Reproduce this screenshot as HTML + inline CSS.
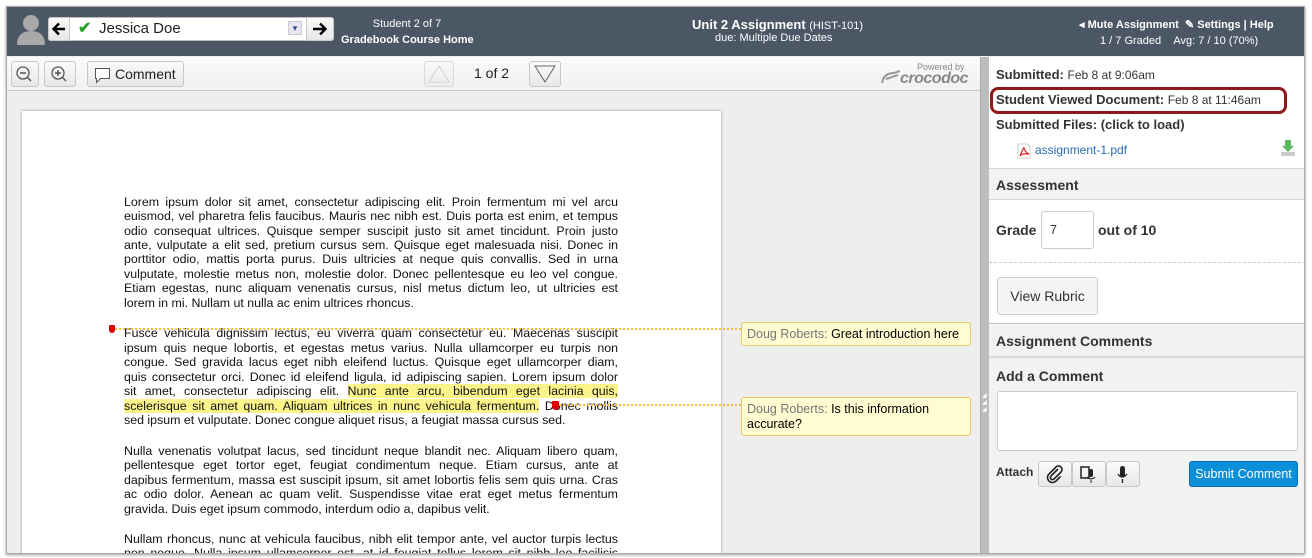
<!DOCTYPE html>
<html><head><meta charset="utf-8"><style>
*{box-sizing:border-box;margin:0;padding:0}
body{width:1312px;height:558px;background:#fff;font-family:"Liberation Sans",Arial,sans-serif;position:relative;overflow:hidden;color:#333}
.a{position:absolute}
#frame{left:6px;top:6px;width:1299px;height:548px;border:1px solid #aaa;box-shadow:0 1px 3px rgba(0,0,0,.4);overflow:hidden;background:#eee}
#hdr{left:0;top:0;width:1299px;height:49px;background:#4c5766;color:#fff}
.btn{position:absolute;background:linear-gradient(#fafafa,#e8e8e8);border:1px solid #c8c8c8;border-radius:3px}
.ln{position:absolute;left:117px;width:494px;font-size:12.4px;line-height:14.4px;color:#111;text-align:justify;text-align-last:justify;white-space:nowrap;height:15px;overflow:visible}
.ln.l{text-align-last:left}
.hl{background:#fbf48a}
.rp{font-size:13px}
</style></head><body>
<div id="frame" class="a">
 <div id="hdr" class="a">
  <svg class="a" style="left:9px;top:6px" width="30" height="32" viewBox="0 0 30 32"><circle cx="15" cy="10" r="8" fill="#a9a9a9"/><path d="M1 32 Q1 18 15 18 Q29 18 29 32Z" fill="#a9a9a9"/></svg>
  <div class="a" style="left:41px;top:10px;width:286px;height:24px;background:#fff;border:1px solid #bbb;border-radius:3px"></div>
  <div class="btn" style="left:41px;top:10px;width:22px;height:24px;border-radius:3px 0 0 3px"><svg width="20" height="22"><path d="M16 11H5M10 5.5L4.5 11l5.5 5.5" fill="none" stroke="#000" stroke-width="2.4"/></svg></div>
  <div class="btn" style="left:299px;top:10px;width:28px;height:24px;border-radius:0 3px 3px 0"><svg width="26" height="22"><path d="M6 11h12M13 5.5l5.5 5.5L13 16.5" fill="none" stroke="#000" stroke-width="2.4"/></svg></div>
  <div class="a" style="left:71px;top:11px;color:#2ca02c;font-size:16px;font-weight:bold">✔</div>
  <div class="a" style="left:92px;top:13px;color:#222;font-size:15px">Jessica Doe</div>
  <div class="a" style="left:281px;top:14px;width:14px;height:14px;background:#e6e6f0;border:1px solid #ccc;color:#2b4a9a;font-size:9px;text-align:center;line-height:13px">▾</div>
  <div class="a" style="left:340px;top:11px;width:120px;text-align:center;font-size:11px">Student 2 of 7</div>
  <div class="a" style="left:334px;top:27px;font-size:11px;font-weight:bold">Gradebook Course Home</div>
  <div class="a" style="left:685px;top:10px;font-size:13px;font-weight:bold">Unit 2 Assignment <span style="font-weight:normal;font-size:11px">(HIST-101)</span></div>
  <div class="a" style="left:708px;top:25px;font-size:11px">due: Multiple Due Dates</div>
  <div class="a" style="left:1072px;top:11px;font-size:11px;font-weight:bold">◂ Mute Assignment &nbsp;✎ Settings | Help</div>
  <div class="a" style="left:1093px;top:28px;font-size:11px">1 / 7 Graded &nbsp;&nbsp;&nbsp;Avg: 7 / 10 (70%)</div>
 </div>
 <div class="a" style="left:0;top:50px;width:973px;height:34px;background:linear-gradient(#fbfbfb,#f1f1f1);border-bottom:1px solid #c8c8c8"></div>
 <div class="btn" style="left:4px;top:54px;width:28px;height:26px"><svg width="26" height="24"><circle cx="11" cy="11" r="6" fill="none" stroke="#555" stroke-width="1.3"/><path d="M8 11h6M15 15l4 4" stroke="#555" stroke-width="1.5"/></svg></div>
 <div class="btn" style="left:37px;top:54px;width:32px;height:26px"><svg width="30" height="24"><circle cx="13" cy="11" r="6" fill="none" stroke="#555" stroke-width="1.3"/><path d="M10 11h6M13 8v6M17 15l4 4" stroke="#555" stroke-width="1.5"/></svg></div>
 <div class="btn" style="left:80px;top:54px;width:97px;height:26px;font-size:14px;color:#222;line-height:24px;padding-left:27px">Comment<svg class="a" style="left:6px;top:5px" width="18" height="17"><path d="M1.5 1.5h14v10h-9l-4 4v-4h-1z" fill="#fff" stroke="#555"/></svg></div>
 <div class="btn" style="left:417px;top:54px;width:30px;height:26px;opacity:.6"><svg width="28" height="24"><path d="M4 20L14 4 24 20Z" fill="none" stroke="#bbb"/></svg></div>
 <div class="a" style="left:467px;top:58px;font-size:14px;color:#222">1 of 2</div>
 <div class="btn" style="left:522px;top:54px;width:32px;height:26px"><svg width="30" height="24"><path d="M5 4L15 20 25 4Z" fill="none" stroke="#666"/></svg></div>
 <div class="a" style="left:910px;top:55px;font-size:9px;color:#888">Powered by</div>
 <div class="a" style="left:893px;top:63px;font-size:16px;color:#888;font-style:italic;font-weight:bold;letter-spacing:-0.5px">crocodoc</div>
 <svg class="a" style="left:873px;top:62px" width="22" height="16"><path d="M2 14Q4 4 14 4L20 2M6 10l12-4" fill="none" stroke="#999" stroke-width="2"/></svg>
 <div class="a" style="left:15px;top:104px;width:699px;height:460px;background:#fff;box-shadow:0 0 3px rgba(0,0,0,.35)"></div>
 <div class="ln" style="top:188px">Lorem ipsum dolor sit amet, consectetur adipiscing elit. Proin fermentum mi vel arcu</div>
 <div class="ln" style="top:202px">euismod, vel pharetra felis faucibus. Mauris nec nibh est. Duis porta est enim, et tempus</div>
 <div class="ln" style="top:217px">odio consequat ultrices. Quisque semper suscipit justo sit amet tincidunt. Proin justo</div>
 <div class="ln" style="top:231px">ante, vulputate a elit sed, pretium cursus sem. Quisque eget malesuada nisi. Donec in</div>
 <div class="ln" style="top:245px">porttitor odio, mattis porta purus. Duis ultricies at neque quis convallis. Sed in urna</div>
 <div class="ln" style="top:260px">vulputate, molestie metus non, molestie dolor. Donec pellentesque eu leo vel congue.</div>
 <div class="ln" style="top:274px">Etiam egestas, nunc aliquam venenatis cursus, nisl metus dictum leo, ut ultricies est</div>
 <div class="ln l" style="top:289px">lorem in mi. Nullam ut nulla ac enim ultrices rhoncus.</div>
 <div class="ln" style="top:319px">Fusce vehicula dignissim lectus, eu viverra quam consectetur eu. Maecenas suscipit</div>
 <div class="ln" style="top:334px">ipsum quis neque lobortis, et egestas metus varius. Nulla ullamcorper eu turpis non</div>
 <div class="ln" style="top:348px">congue. Sed gravida lacus eget nibh eleifend luctus. Quisque eget ullamcorper diam,</div>
 <div class="ln" style="top:363px">quis consectetur orci. Donec id eleifend ligula, id adipiscing sapien. Lorem ipsum dolor</div>
 <div class="ln" style="top:377px">sit amet, consectetur adipiscing elit. <span class="hl">Nunc ante arcu, bibendum eget lacinia quis,</span></div>
 <div class="ln" style="top:392px"><span class="hl">scelerisque sit amet quam. Aliquam ultrices in nunc vehicula fermentum.</span> Donec mollis</div>
 <div class="ln l" style="top:406px">sed ipsum et vulputate. Donec congue aliquet risus, a feugiat massa cursus sed.</div>
 <div class="ln" style="top:437px">Nulla venenatis volutpat lacus, sed tincidunt neque blandit nec. Aliquam libero quam,</div>
 <div class="ln" style="top:451px">pellentesque eget tortor eget, feugiat condimentum neque. Etiam cursus, ante at</div>
 <div class="ln" style="top:466px">dapibus fermentum, massa est suscipit ipsum, sit amet lobortis felis sem quis urna. Cras</div>
 <div class="ln" style="top:480px">ac odio dolor. Aenean ac quam velit. Suspendisse vitae erat eget metus fermentum</div>
 <div class="ln l" style="top:495px">gravida. Duis eget ipsum commodo, interdum odio a, dapibus velit.</div>
 <div class="ln" style="top:525px">Nullam rhoncus, nunc at vehicula faucibus, nibh elit tempor ante, vel auctor turpis lectus</div>
 <div class="ln" style="top:539px">non neque. Nulla ipsum ullamcorper est, at id feugiat tellus lorem sit nibh leo facilisis</div>
 <div class="a" style="left:102px;top:318px;width:6px;height:8px;background:#d00;border-radius:1px 1px 3px 3px"></div>
 <div class="a" style="left:108px;top:321px;width:626px;border-top:2px dotted #f0c040"></div>
 <div class="a" style="left:545px;top:394px;width:7px;height:9px;background:#d00;border-radius:1px 1px 4px 4px"></div>
 <div class="a" style="left:552px;top:397px;width:182px;border-top:2px dotted #f0c040"></div>
 <div class="a" style="left:734px;top:315px;width:230px;height:24px;background:#fffcd2;border:1px solid #e8c86a;border-radius:3px;font-size:12.5px;padding:4px 5px;color:#000;white-space:nowrap"><span style="color:#777">Doug Roberts:</span> Great introduction here</div>
 <div class="a" style="left:734px;top:390px;width:230px;height:39px;background:#fffcd2;border:1px solid #e8c86a;border-radius:3px;font-size:12.5px;padding:4px 5px;color:#000;line-height:15px"><span style="color:#777">Doug Roberts:</span> Is this information accurate?</div>
 <div class="a" style="left:973px;top:50px;width:9px;height:500px;background:#bdbdbd;border-left:1px solid #aaa"></div>
 <div class="a" style="left:975px;top:386px;font-size:6px;color:#fff;line-height:7px">◢<br>◢<br>◢</div>
 <div class="a rp" style="left:982px;top:50px;width:317px;height:500px;background:#fff">
  <div class="a" style="left:7px;top:10px;white-space:nowrap"><b>Submitted:</b> <span style="font-size:12px">Feb 8 at 9:06am</span></div>
  <div class="a" style="left:1px;top:30px;width:297px;height:27px;border:3px solid #8c1a1a;border-radius:8px"></div>
  <div class="a" style="left:7px;top:35px;white-space:nowrap"><b>Student Viewed Document:</b> <span style="font-size:12px">Feb 8 at 11:46am</span></div>
  <div class="a" style="left:7px;top:60px"><b>Submitted Files: (click to load)</b></div>
  <svg class="a" style="left:28px;top:86px" width="14" height="16"><path d="M1 1h9l3 3v11H1z" fill="#fff" stroke="#ccc"/><path d="M3 13Q7 3 7 5Q8 9 12 11Q5 10 3 13" fill="none" stroke="#d22" stroke-width="1.2"/></svg>
  <div class="a" style="left:46px;top:86px;font-size:12px;color:#2a6bb5">assignment-1.pdf</div>
  <svg class="a" style="left:291px;top:82px" width="16" height="18"><path d="M5 1h6v6h3L8 13 2 7h3z" fill="#5cb85c"/><rect x="1" y="13" width="14" height="4" fill="#ccc"/></svg>
  <div class="a" style="left:0;top:111px;width:317px;height:32px;background:#f2f2f2;border-top:1px solid #d4d4d4;border-bottom:1px solid #d4d4d4"></div>
  <div class="a" style="left:7px;top:120px;font-weight:bold;font-size:14px">Assessment</div>
  <div class="a" style="left:7px;top:165px;font-weight:bold;font-size:14px">Grade</div>
  <div class="a" style="left:52px;top:154px;width:53px;height:38px;border:1px solid #ccc;border-radius:3px;font-size:12.5px;padding:11px 8px;color:#333">7</div>
  <div class="a" style="left:109px;top:165px;font-weight:bold;font-size:14px">out of 10</div>
  <div class="a" style="left:0;top:205px;width:317px;border-top:1px dashed #ccc"></div>
  <div class="a" style="left:8px;top:220px;width:101px;height:38px;background:#f5f5f5;border:1px solid #ccc;border-radius:3px;font-size:14px;text-align:center;line-height:36px">View Rubric</div>
  <div class="a" style="left:0;top:266px;width:317px;height:234px;background:#f2f2f2;border-top:1px solid #c8c8c8"></div>
  <div class="a" style="left:7px;top:276px;font-weight:bold;font-size:14px">Assignment Comments</div>
  <div class="a" style="left:0;top:299px;width:317px;border-top:2px solid #d8d8d8"></div>
  <div class="a" style="left:7px;top:311px;font-weight:bold;font-size:14px">Add a Comment</div>
  <div class="a" style="left:8px;top:334px;width:301px;height:60px;background:#fff;border:1px solid #ccc;border-radius:3px"></div>
  <div class="a" style="left:7px;top:408px;font-weight:bold;font-size:12px">Attach</div>
  <div class="btn" style="left:49px;top:404px;width:34px;height:26px"><svg width="32" height="24"><path d="M19 7l-7 7a2 2 0 0 0 3 3l7-7a3.5 3.5 0 0 0-5-5l-7.5 7.5a5 5 0 0 0 7 7l5-5" fill="none" stroke="#222" stroke-width="1.6"/></svg></div>
  <div class="btn" style="left:83px;top:404px;width:34px;height:26px"><svg width="32" height="24"><rect x="8" y="5" width="8" height="11" fill="none" stroke="#222" stroke-width="1.5"/><rect x="16" y="7" width="4" height="8" rx="2" fill="#222"/><path d="M14 15q4 4 8 0M18 18v3" stroke="#222" fill="none"/></svg></div>
  <div class="btn" style="left:117px;top:404px;width:34px;height:26px"><svg width="32" height="24"><rect x="13" y="4" width="5" height="11" rx="2.5" fill="#222"/><path d="M11 12q4 6 9 0M15.5 17v4" stroke="#222" fill="none" stroke-width="1.3"/></svg></div>
  <div class="a" style="left:200px;top:404px;width:109px;height:26px;background:#0a8fd8;border:1px solid #0770b0;border-radius:3px;color:#fff;font-size:12.5px;text-align:center;line-height:24px">Submit Comment</div>
 </div>
</div>
</body></html>
